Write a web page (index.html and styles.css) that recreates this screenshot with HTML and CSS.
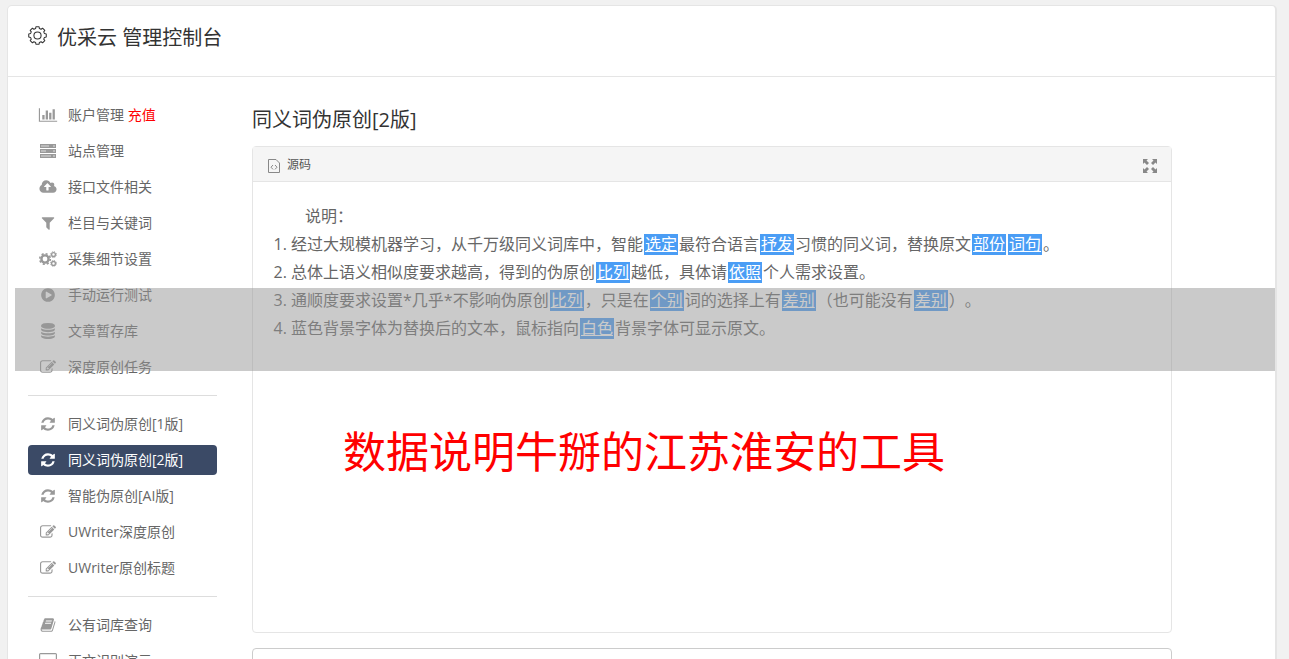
FILE: index.html
```
<!DOCTYPE html>
<html lang="zh-CN">
<head>
  <meta charset="utf-8">
  <title>优采云 管理控制台</title>

  <link rel="stylesheet" href="styles.css">
</head>
<body>

  <svg class="sprite" aria-hidden="true">
    <symbol id="bar-chart" viewBox="0 0 2048 1792"><path d="M640 896v512h-256v-512h256zm384-512v1024h-256v-1024h256zm1024 1152v128h-2048v-1536h128v1408h1920zm-640-896v768h-256v-768h256zm384-384v1152h-256v-1152h256z"/></symbol>
    <symbol id="server" viewBox="0 0 18 16"><path d="M1 1h16v4H1zM1 6h16v4H1zM1 11h16v4H1z"/><path class="slot" d="M2 2.500h8v1H2zM14 2.500h2v1h-2zM2 7.500h5v1H2zM14 7.500h2v1h-2zM2 12.500h10v1H2zM14 12.500h2v1h-2z"/></symbol>
    <symbol id="cloud-upload" viewBox="0 0 1920 1792"><path d="M1280 864q0-14-9-23l-352-352q-9-9-23-9t-23 9l-351 351q-10 12-10 24 0 14 9 23t23 9h224v352q0 13 9.5 22.5t22.5 9.5h192q13 0 22.5-9.5t9.5-22.5v-352h224q13 0 22.5-9.5t9.5-22.5zm640 288q0 159-112.5 271.5t-271.5 112.5h-1088q-185 0-316.5-131.5t-131.5-316.5q0-130 70-240t188-165q-2-30-2-43 0-212 150-362t362-150q156 0 285.5 87t188.5 231q71-62 166-62 106 0 181 75t75 181q0 76-41 138 130 31 213.5 135.5t83.5 238.5z"/></symbol>
    <symbol id="filter" viewBox="0 0 1792 1792"><path d="M1595 295q17 41-14 70l-493 493v742q0 42-39 59-13 5-25 5-27 0-45-19l-256-256q-19-19-19-45v-486l-493-493q-31-29-14-70 17-39 59-39h1280q42 0 59 39z"/></symbol>
    <symbol id="cogs" viewBox="0 0 18 16">
      <g fill="none" stroke="currentColor">
        <circle cx="6" cy="8" r="3.6" stroke-width="2.4"/>
        <circle cx="6" cy="8" r="5.3" stroke-width="1.6" stroke-dasharray="2.1 2.06"/>
        <circle cx="14.5" cy="3.6" r="1.9" stroke-width="1.3"/>
        <circle cx="14.5" cy="3.6" r="2.9" stroke-width="1" stroke-dasharray="1.2 1.08"/>
        <circle cx="14.5" cy="12.4" r="1.9" stroke-width="1.3"/>
        <circle cx="14.5" cy="12.4" r="2.9" stroke-width="1" stroke-dasharray="1.2 1.08"/>
      </g>
    </symbol>
    <symbol id="play" viewBox="0 0 1792 1792"><path d="M896 128q209 0 385.5 103t279.5 279.5 103 385.5-103 385.5-279.5 279.5-385.5 103-385.5-103-279.5-279.5-103-385.5 103-385.5 279.5-279.5 385.5-103zm384 823q32-18 32-55t-32-55l-544-320q-31-19-64-1-32 19-32 56v640q0 37 32 56 16 8 32 8 17 0 32-9z"/></symbol>
    <symbol id="database" viewBox="0 0 1792 1792"><path d="M896 768q237 0 443-43t325-127v170q0 69-103 128t-280 93.5-385 34.5-385-34.5-280-93.5-103-128v-170q119 84 325 127t443 43zm0 768q237 0 443-43t325-127v170q0 69-103 128t-280 93.5-385 34.5-385-34.5-280-93.5-103-128v-170q119 84 325 127t443 43zm0-384q237 0 443-43t325-127v170q0 69-103 128t-280 93.5-385 34.5-385-34.5-280-93.5-103-128v-170q119 84 325 127t443 43zm0-1152q208 0 385 34.5t280 93.5 103 128v128q0 69-103 128t-280 93.5-385 34.5-385-34.5-280-93.5-103-128v-128q0-69 103-128t280-93.5 385-34.5z"/></symbol>
    <symbol id="edit" viewBox="0 0 1792 1792"><path d="M888 1184l116-116-152-152-116 116v56h96v96h56zm440-720q-16-16-33 1l-350 350q-17 17-1 33t33-1l350-350q17-17 1-33zm80 594v190q0 119-84.5 203.5t-203.5 84.5h-832q-119 0-203.5-84.5t-84.5-203.5v-832q0-119 84.5-203.5t203.5-84.5h832q63 0 117 25 15 7 18 23 3 17-9 29l-49 49q-14 14-32 8-23-6-45-6h-832q-66 0-113 47t-47 113v832q0 66 47 113t113 47h832q66 0 113-47t47-113v-126q0-13 9-22l64-64q15-15 35-7t20 29zm-96-738l288 288-672 672h-288v-288zm444 132l-92 92-288-288 92-92q28-28 68-28t68 28l152 152q28 28 28 68t-28 68z"/></symbol>
    <symbol id="refresh" viewBox="0 0 1792 1792"><path d="M1639 1056q0 5-1 7-64 268-268 434.5t-478 166.5q-146 0-282.5-55t-243.5-157l-129 129q-19 19-45 19t-45-19-19-45v-448q0-26 19-45t45-19h448q26 0 45 19t19 45-19 45l-137 137q71 66 161 102t187 36q134 0 250-65t186-179q11-17 53-117 8-23 30-23h192q13 0 22.5 9.5t9.5 22.5zm25-800v448q0 26-19 45t-45 19h-448q-26 0-45-19t-19-45 19-45l138-138q-148-137-349-137-134 0-250 65t-186 179q-11 17-53 117-8 23-30 23h-199q-13 0-22.5-9.5t-9.5-22.5v-7q65-268 270-434.5t480-166.5q146 0 284 55.5t245 156.5l130-129q19-19 45-19t45 19 19 45z"/></symbol>
    <symbol id="book" viewBox="0 0 1792 1792"><path d="M1703 478q40 57 18 129l-275 906q-19 64-76.5 107.5t-122.5 43.5h-923q-77 0-148.5-53.5t-99.5-131.5q-24-67-2-127 0-4 3-27t4-37q1-8-3-21.5t-3-19.5q2-11 8-21t16.5-23.5 16.5-23.5q23-38 45-91.5t30-91.5q3-10 .5-30t-.5-28q3-11 17-28t17-23q21-36 42-92t25-90q1-9-2.5-32t.5-28q4-13 22-30.5t22-22.5q19-26 42.5-84.5t27.5-96.5q1-8-3-25.5t-2-26.5q2-8 9-18t18-23 17-21q8-12 16.5-30.5t15-35 16-36 19.5-32 26.5-23.5 36-11.5 47.5 5.5l-1 3q38-9 51-9h761q74 0 114 56t18 130l-274 906q-36 119-71.5 153.5t-128.5 34.5h-869q-27 0-38 15-11 16-1 43 24 70 144 70h923q29 0 56-15.5t35-41.5l300-987q7-22 5-57 38 15 59 43zm-1064 2q-4 13 2 22.5t20 9.5h608q13 0 25.5-9.5t16.5-22.5l21-64q4-13-2-22.5t-20-9.5h-608q-13 0-25.5 9.5t-16.5 22.5zm-83 256q-4 13 2 22.5t20 9.5h608q13 0 25.5-9.5t16.5-22.5l21-64q4-13-2-22.5t-20-9.5h-608q-13 0-25.5 9.5t-16.5 22.5z"/></symbol>
    <symbol id="desktop" viewBox="0 0 18 16"><path fill-rule="evenodd" d="M1.500 0h15q1.500 0 1.500 1.500v9q0 1.500-1.500 1.500H11l1 3v1H6v-1l1-3H1.500Q0 12 0 10.500v-9Q0 0 1.500 0zM1.200 1.200v8.300h15.600V1.200z"/></symbol>
  </svg>

  <div class="panel">

    <header class="panel-header">
      <svg class="gear" viewBox="-9 -9 18 18" aria-hidden="true">
        <path d="M8.300-1.500V1.500L6.600 1.800 5.900 3.400 6.900 4.800 4.800 6.900 3.400 5.900 1.800 6.600 1.500 8.300H-1.500L-1.800 6.600-3.400 5.900-4.800 6.900-6.900 4.800-5.900 3.400-6.600 1.800-8.300 1.500V-1.500L-6.600-1.800-5.900-3.400-6.900-4.800-4.800-6.900-3.400-5.900-1.800-6.600-1.500-8.300H1.500L1.800-6.600 3.400-5.900 4.800-6.900 6.900-4.800 5.900-3.400 6.600-1.800z"/>
        <circle r="3.400"/>
      </svg>
      <h1>优采云 管理控制台</h1>
    </header>

    <div class="panel-body">

      <nav class="menu">
        <a href="#"><svg class="icon"><use href="#bar-chart"/></svg><span>账户管理 <span class="recharge">充值</span></span></a>
        <a href="#"><svg class="icon"><use href="#server"/></svg>站点管理</a>
        <a href="#"><svg class="icon"><use href="#cloud-upload"/></svg>接口文件相关</a>
        <a href="#"><svg class="icon"><use href="#filter"/></svg>栏目与关键词</a>
        <a href="#"><svg class="icon"><use href="#cogs"/></svg>采集细节设置</a>
        <a href="#"><svg class="icon"><use href="#play"/></svg>手动运行测试</a>
        <a href="#"><svg class="icon"><use href="#database"/></svg>文章暂存库</a>
        <a href="#"><svg class="icon"><use href="#edit"/></svg>深度原创任务</a>
        <hr>
        <a href="#"><svg class="icon"><use href="#refresh"/></svg>同义词伪原创[1版]</a>
        <a href="#" class="active"><svg class="icon"><use href="#refresh"/></svg>同义词伪原创[2版]</a>
        <a href="#"><svg class="icon"><use href="#refresh"/></svg>智能伪原创[AI版]</a>
        <a href="#"><svg class="icon"><use href="#edit"/></svg>UWriter深度原创</a>
        <a href="#"><svg class="icon"><use href="#edit"/></svg>UWriter原创标题</a>
        <hr>
        <a href="#"><svg class="icon"><use href="#book"/></svg>公有词库查询</a>
        <a href="#"><svg class="icon"><use href="#desktop"/></svg>正文识别演示</a>
      </nav>

      <main class="content">
        <h2>同义词伪原创[2版]</h2>

        <section class="editor">
          <div class="toolbar">
            <button type="button" class="source">
              <svg viewBox="0 0 12 14" aria-hidden="true"><path d="M.5.500h7.500l3.500 3.500v9.500H.500zM5 6L3 8.200l2 2.200M7 6l2 2.200-2 2.200"/></svg>
              源码
            </button>
            <button type="button" class="expand" aria-label="全屏">
              <svg viewBox="0 0 14 14" aria-hidden="true"><path d="M0 0h5L3.500 1.500 6 4 4 6 1.500 3.500 0 5zM14 0v5l-1.500-1.500L10 6 8 4l2.500-2.500L9 0zM0 14V9l1.500 1.500L4 8l2 2-2.500 2.500L5 14zM14 14H9l1.500-1.500L8 10l2-2 2.500 2.500L14 9z"/></svg>
            </button>
          </div>

          <div class="document">
            <p>说明：</p>
            <ol>
              <li>经过大规模机器学习，从千万级同义词库中，智能<mark>选定</mark>最符合语言<mark>抒发</mark>习惯的同义词，替换原文<mark>部份</mark><mark>词句</mark>。</li>
              <li>总体上语义相似度要求越高，得到的伪原创<mark>比列</mark>越低，具体请<mark>依照</mark>个人需求设置。</li>
              <li>通顺度要求设置*几乎*不影响伪原创<mark>比列</mark>，只是在<mark>个别</mark>词的选择上有<mark>差别</mark>（也可能没有<mark>差别</mark>）。</li>
              <li>蓝色背景字体为替换后的文本，鼠标指向<mark>白色</mark>背景字体可显示原文。</li>
            </ol>
          </div>
        </section>

        <section class="result"></section>
      </main>

    </div>

    <div class="band"></div>
    <div class="caption">数据说明牛掰的江苏淮安的工具</div>
  </div>

</body>
</html>
```
FILE: styles.css
```
* {
  box-sizing: border-box;
}

body {
  height: 100vh;
  margin: 0;
  padding: 5px 12px 0 7px;
  overflow: hidden;
  background: #f1f1f1;
  color: #666;
  font-family: "Open Sans", "Noto Sans CJK SC", sans-serif;
  font-size: 14px;
  text-spacing-trim: space-all;
}

h1, h2 {
  margin: 0;
  color: #333;
  font-size: 20px;
  font-weight: 400;
  line-height: 30px;
}

.sprite {
  display: none;
}

.panel {
  position: relative;
  border: 1px solid #e5e5e5;
  border-right-width: 2px;
  border-radius: 5px;
  background: #fff;
}

.panel-header {
  display: flex;
  gap: 10px;
  height: 71px;
  padding: 17px 20px;
  border-bottom: 1px solid #e5e5e5;
}

.gear {
  width: 19px;
  height: 19px;
  margin-top: 3px;
  fill: none;
  stroke: #333;
  stroke-linejoin: round;
}

.panel-body {
  display: flex;
  gap: 35px;
  padding: 23px 20px;
}

/* menu */

.menu {
  display: flex;
  flex: 0 0 189px;
  flex-direction: column;
  gap: 6px;
}

.menu a {
  display: flex;
  align-items: center;
  gap: 10px;
  height: 30px;
  padding: 0 10px;
  border-radius: 4px;
  color: #666;
  line-height: 30px;
  text-decoration: none;
}

.menu hr {
  width: 100%;
  height: 1px;
  margin: 7px 0;
  border: 0;
  background: #ddd;
}

.menu .active {
  background: #3b4a66;
  color: #fff;
}

.icon {
  width: 20px;
  height: 16px;
  color: #999;
  fill: currentColor;
}

.slot {
  fill: #ddd;
}

.active .icon {
  color: #fff;
}

.recharge {
  color: #f00;
}

/* editor */

.content {
  flex: 1;
  max-width: 920px;
  padding-top: 5px;
}

.editor {
  height: 487px;
  margin: 11px 0 15px;
  border: 1px solid #e5e5e5;
  border-radius: 4px;
}

.toolbar {
  display: flex;
  align-items: center;
  justify-content: space-between;
  height: 35px;
  padding: 0 14px;
  border-bottom: 1px solid #e5e5e5;
  background: #f5f5f5;
}

.toolbar button {
  display: flex;
  align-items: center;
  gap: 7px;
  padding: 0;
  border: 0;
  background: none;
  color: #555;
  font: inherit;
  font-size: 12px;
}

.source svg {
  width: 12px;
  height: 14px;
  margin: 3px 0 0 1px;
  fill: none;
  stroke: #888;
}

.expand svg {
  width: 14px;
  height: 14px;
  margin-top: 3px;
  fill: #888;
}

.document {
  padding: 20px;
  font-size: 16px;
  line-height: 28px;
}

.document p {
  margin: 0;
  text-indent: 2em;
}

.document ol {
  margin: 0;
  padding-left: 18px;
}

mark {
  margin: 0 1px;
  padding: 0 1px;
  background: linear-gradient(#4a9df5, #4a9df5) center / 100% 21px no-repeat;
  color: #fff;
  text-decoration: underline;
}

.result {
  height: 200px;
  border: 1px solid #ccc;
  border-radius: 4px;
}

/* laid over the panel */

.band {
  position: absolute;
  top: 282px;
  left: 7px;
  right: 0;
  height: 83px;
  background: rgba(150, 150, 150, .5);
}

.caption {
  position: absolute;
  top: 416px;
  left: 5px;
  right: 0;
  color: #f00;
  font-size: 43px;
  line-height: 60px;
  text-align: center;
}
```
